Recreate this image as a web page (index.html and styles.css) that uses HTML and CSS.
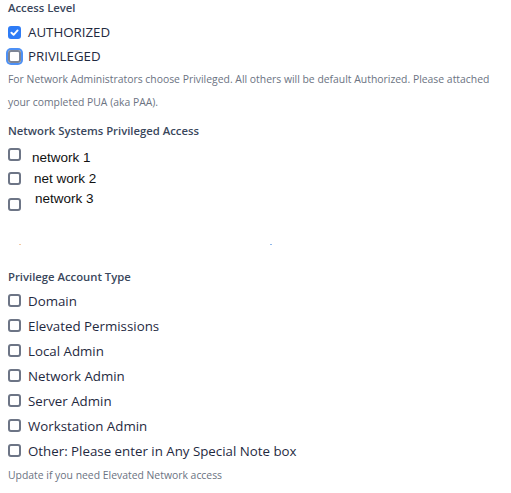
FILE: index.html
```html
<!DOCTYPE html>
<html>
<head>
<meta charset="utf-8">
<link rel="stylesheet" href="styles.css">
</head>
<body>
<div class="form">
  <div class="label lbl-access">Access Level</div>
  <label class="opt">
    <span class="cb checked"><svg viewBox="0 0 13 13" width="13" height="13"><path d="M3.4 6.7 L5.6 8.8 L9.6 4.4" fill="none" stroke="#fff" stroke-width="1.9" stroke-linecap="round" stroke-linejoin="round"/></svg></span>
    <span class="txt">AUTHORIZED</span>
  </label>
  <label class="opt">
    <span class="cb focus"></span>
    <span class="txt">PRIVILEGED</span>
  </label>
  <p class="help help-top">For Network Administrators choose Privileged. All others will be default Authorized. Please attached your completed PUA (aka PAA).</p>

  <div class="label lbl-net">Network Systems Privileged Access</div>
  <div class="net-list">
    <label class="net net1"><span class="cb"></span><span class="ntxt">network 1</span></label>
    <label class="net net2"><span class="cb"></span><span class="ntxt">net work 2</span></label>
    <label class="net net3"><span class="cb"></span><span class="ntxt">network 3</span></label>
  </div>
  <div class="dots"><span class="dot dot-o"></span><span class="dot dot-b"></span></div>

  <div class="label lbl-type">Privilege Account Type</div>
  <div class="type-list">
    <label class="opt2"><span class="cb"></span><span class="txt">Domain</span></label>
    <label class="opt2"><span class="cb"></span><span class="txt">Elevated Permissions</span></label>
    <label class="opt2"><span class="cb"></span><span class="txt">Local Admin</span></label>
    <label class="opt2"><span class="cb"></span><span class="txt">Network Admin</span></label>
    <label class="opt2"><span class="cb"></span><span class="txt">Server Admin</span></label>
    <label class="opt2"><span class="cb"></span><span class="txt">Workstation Admin</span></label>
    <label class="opt2"><span class="cb"></span><span class="txt">Other: Please enter in Any Special Note box</span></label>
  </div>
  <p class="help help-bottom">Update if you need Elevated Network access</p>
</div>
</body>
</html>
```

FILE: styles.css
```css
html, body {
  margin: 0;
  padding: 0;
  background: #ffffff;
}
body {
  font-family: "Open Sans", "Noto Sans", sans-serif;
  color: #1f2a3f;
}
.form {
  display: flex;
  flex-direction: column;
  padding: 0 8px;
}
.label {
  font-size: 11.3px;
  font-weight: 600;
  color: #3a475c;
  height: 16px;
  line-height: 16px;
}
.lbl-net { margin-top: 9px; }
.opt, .opt2 {
  display: flex;
  align-items: center;
  gap: 7px;
  height: 24px;
  font-size: 13.3px;
  color: #1f2a3f;
}
.lbl-access + .opt { margin-top: 4px; }
.opt2 { height: 25px; }
.type-list { margin-top: 3px; display: flex; flex-direction: column; }
.cb {
  box-sizing: border-box;
  width: 13px;
  height: 13px;
  border: 2px solid #6d7586;
  border-radius: 3px;
  flex: none;
  display: flex;
  align-items: center;
  justify-content: center;
}
.cb.checked {
  background: #2e7cf6;
  border-color: #2e7cf6;
}
.cb.checked svg { flex: none; }
.cb.focus {
  box-shadow: 0 0 0 2px #4d90f5;
  border-color: #7d8595;
}
.help {
  margin: 0;
  font-size: 10.4px;
  line-height: 23px;
  color: #6b7382;
}
.net-list { display: flex; flex-direction: column; margin-top: 5px; }
.net {
  display: flex;
  height: 24px;
  font-family: "Liberation Sans", "Open Sans", sans-serif;
  font-size: 13.5px;
  color: #111;
}
.net .cb { margin-top: 4px; }
.net1 .ntxt { margin-left: 11px; padding-top: 6px; }
.net2 .ntxt { margin-left: 13px; padding-top: 3px; }
.net3 .cb { margin-top: 6px; }
.net3 .ntxt { margin-left: 14px; margin-top: -1px; }
.dots {
  position: relative;
  height: 53px;
}
.dot {
  position: absolute;
  top: 28px;
  width: 2px;
  height: 1px;
}
.dot-o { left: 11px; background: #f3c9a4; }
.dot-b { left: 262px; background: #8fb8ea; }
.help-bottom { margin-top: 0; line-height: 24px; }
```
